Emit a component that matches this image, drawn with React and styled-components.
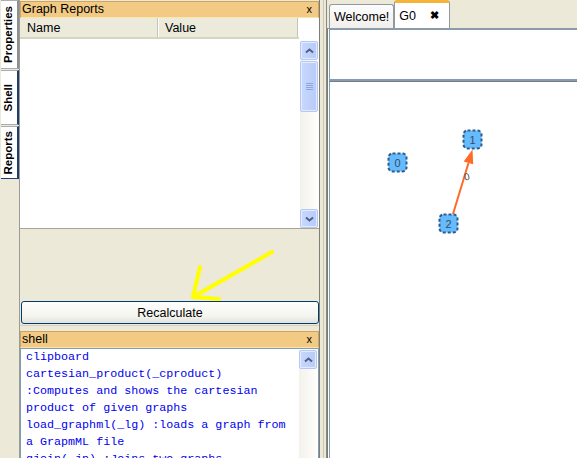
import React from 'react';
import styled, { createGlobalStyle } from 'styled-components';

const GlobalStyle = createGlobalStyle`
  html, body {
    margin: 0;
    padding: 0;
    background: #ECE9D8;
  }
  body {
    font-family: "Liberation Sans", Arial, sans-serif;
  }
`;

const Window = styled.div`
  position: relative;
  width: 577px;
  height: 458px;
  display: flex;
  background: #ECE9D8;
  overflow: hidden;
  font-size: 12.5px;
  color: #000;
`;

/* ---- left vertical tab strip ---- */

const SideStrip = styled.div`
  width: 19px;
  flex: none;
  display: flex;
  flex-direction: column;
  gap: 1px;
  padding-left: 1px;
  box-sizing: border-box;
`;

const SideTab = styled.div`
  height: ${({ h }) => h}px;
  box-sizing: border-box;
  background: #fff;
  border: 1px solid #A9ADAD;
  border-left: none;
  border-right: 2px solid ${({ active }) => (active ? '#1E3F6D' : '#8C9090')};
  border-bottom-color: ${({ last }) => (last ? '#1E3F6D' : '#A9ADAD')};
  display: flex;
  align-items: center;
  justify-content: center;
`;

const SideLabel = styled.span`
  writing-mode: vertical-rl;
  transform: rotate(180deg);
  font-weight: bold;
  font-size: 11.5px;
  line-height: 1;
`;

/* ---- left panel ---- */

const LeftPanel = styled.div`
  width: 300px;
  flex: none;
  display: flex;
  flex-direction: column;
  border-left: 1px solid #9C9C94;
  box-sizing: border-box;
`;

const TitleBar = styled.div`
  height: 17px;
  margin-top: 1px;
  box-sizing: border-box;
  background: #F2CA84;
  border: 1px solid #CDA563;
  border-bottom-color: #F8E6B0;
  display: flex;
  align-items: center;
  justify-content: space-between;
  padding: 0 6px 0 1px;
  font-size: 12.5px;
  line-height: 1;
`;

const CloseX = styled.span`
  font-size: 11px;
`;

const TableArea = styled.div`
  display: flex;
  height: 210px;
  border-bottom: 1px solid #A8A596;
  background: #fff;
`;

const TableMain = styled.div`
  flex: 1;
  display: flex;
  flex-direction: column;
`;

const HeaderRow = styled.div`
  height: 21px;
  box-sizing: border-box;
  display: flex;
  background: #EBEADB;
  border-bottom: 2px solid #D8D4C4;
`;

const HeaderCell = styled.div`
  width: ${({ w }) => w}px;
  box-sizing: border-box;
  padding-left: 7px;
  display: flex;
  align-items: center;
  border-right: 1px solid #C7C5B2;
  box-shadow: 1px 0 0 #fff;
`;

const TableBody = styled.div`
  flex: 1;
  background: #fff;
`;

const ScrollCol = styled.div`
  width: 20px;
  flex: none;
  display: flex;
  flex-direction: column;
  padding: ${({ top }) => top}px 1px 0 1px;
  box-sizing: border-box;
  background: #fff;
`;

const Track = styled.div`
  flex: 1;
  display: flex;
  flex-direction: column;
  background: linear-gradient(to right, #F3F1EB, #FEFEFB);
`;

const ScrollBtn = styled.div`
  height: 19px;
  box-sizing: border-box;
  border: 1px solid #B5C8F3;
  border-radius: 2px;
  background: linear-gradient(to right, #C8D8FD, #B7CBF8);
  box-shadow: inset 0 0 0 1px #E3EBFE;
  display: flex;
  align-items: center;
  justify-content: center;
`;

const Thumb = styled(ScrollBtn)`
  height: 51px;
  margin-top: 1px;
  flex-direction: column;
  gap: 1px;
`;

const Grip = styled.div`
  width: 7px;
  height: 1px;
  background: #8EA6E0;
`;

const Spacer = styled.div`
  flex: 1;
`;

const Blank = styled.div`
  height: 72px;
`;

const Button = styled.button`
  height: 23px;
  margin: 0 0 0 1px;
  border: 1px solid #003C74;
  border-radius: 3px;
  background: linear-gradient(#FEFEFD, #F3F3EF 70%, #E2E1DA);
  font-family: "Liberation Sans", Arial, sans-serif;
  font-size: 12.5px;
  color: #000;
  padding: 0;
`;

const PaneGap = styled.div`
  height: 5px;
  border-top: 1px solid #D4D0C4;
  box-sizing: border-box;
  margin-top: 1px;
`;

const ShellBody = styled.div`
  flex: 1;
  display: flex;
  min-height: 0;
  border: 1px solid #7F9DB9;
  border-bottom: none;
  background: #fff;
  overflow: hidden;
`;

const ShellText = styled.div`
  flex: 1;
  padding: 0 0 0 5px;
  font-family: "Liberation Mono", "Courier New", monospace;
  font-size: 11.7px;
  line-height: 17px;
  color: #0000F0;
  white-space: pre;
`;

/* ---- splitter ---- */

const Splitter = styled.div`
  width: 8px;
  flex: none;
  box-sizing: border-box;
  border-left: 1px solid #7E7E76;
  border-right: 1px solid #8A8A82;
  box-shadow: inset 3px 0 0 #ECE9D8, inset 4px 0 0 #C9C6B6;
`;

/* ---- right editor area ---- */

const RightPanel = styled.div`
  flex: 1;
  display: flex;
  flex-direction: column;
  min-width: 0;
`;

const TabRow = styled.div`
  height: 28px;
  display: flex;
  align-items: flex-end;
  padding-left: 2px;
`;

const DocTab = styled.div`
  height: ${({ active }) => (active ? 28 : 24)}px;
  box-sizing: border-box;
  padding: 0 ${({ active }) => (active ? 10 : 4)}px 0 4px;
  display: flex;
  align-items: center;
  gap: 14px;
  border: 1px solid #919B9C;
  border-bottom: none;
  border-radius: 3px 3px 0 0;
  background: ${({ active }) => (active ? '#fff' : 'linear-gradient(#FCFCFE, #F0EFEA)')};
  border-top: ${({ active }) => (active ? '3px solid #F5B33A' : '1px solid #919B9C')};
  font-size: 12.5px;
`;

const TabClose = styled.span`
  font-size: 11px;
  font-weight: bold;
`;

const Editor = styled.div`
  flex: 1;
  display: flex;
  flex-direction: column;
  background: #fff;
  border-left: 1px solid #7A7A72;
  border-top: 1px solid #919B9C;
  padding-left: 1px;
`;

const TopBox = styled.div`
  height: 49px;
  border-top: 1px solid #7F9DB9;
  border-left: 1px solid #7F9DB9;
  background: #fff;
`;

const Divider = styled.div`
  height: 3px;
  box-sizing: border-box;
  border-top: 1px solid #7F9DB9;
  border-bottom: 1px solid #6D7F8F;
  background: #8D9AA4;
`;

const Canvas = styled.div`
  flex: 1;
  position: relative;
  border-left: 1px solid #7F9DB9;
  background: #fff;
`;

const CanvasSvg = styled.svg`
  position: absolute;
  left: 0;
  top: 0;
  width: 100%;
  height: 100%;
`;

const Overlay = styled.svg`
  position: absolute;
  left: 0;
  top: 0;
  width: 577px;
  height: 458px;
  pointer-events: none;
`;

const Chevron = ({ down }) => (
  <svg width="9" height="6" viewBox="0 0 9 6">
    <path
      d={down ? 'M1 1.5 L4.5 4.5 L8 1.5' : 'M1 4.5 L4.5 1.5 L8 4.5'}
      fill="none"
      stroke="#4D6185"
      strokeWidth="2"
    />
  </svg>
);

const ScrollBar = ({ top, full }) => (
  <ScrollCol top={top}>
    <Track>
      <ScrollBtn><Chevron /></ScrollBtn>
      {full && (
        <Thumb>
          <Grip /><Grip /><Grip /><Grip />
        </Thumb>
      )}
      <Spacer />
      {full && <ScrollBtn><Chevron down /></ScrollBtn>}
    </Track>
  </ScrollCol>
);

const shellLines = [
  'clipboard',
  'cartesian_product(_cproduct)',
  ':Computes and shows the cartesian',
  'product of given graphs',
  'load_graphml(_lg) :loads a graph from',
  'a GrapmML file',
  'gjoin(_jp) :Joins two graphs',
];

const nodes = [
  { id: '0', x: 58, y: 71 },
  { id: '1', x: 133, y: 48 },
  { id: '2', x: 109, y: 132 },
];

const Node = ({ id, x, y }) => (
  <g>
    <rect
      x={x + 0.5}
      y={y + 0.5}
      width="18"
      height="18"
      rx="4"
      fill="#66BBFF"
      stroke="#2F5D8A"
      strokeWidth="2"
      strokeDasharray="3 2"
    />
    <text
      x={x + 9.5}
      y={y + 14}
      textAnchor="middle"
      fontSize="11"
      fontFamily="Liberation Sans, Arial, sans-serif"
      fill="#3C4A5C"
    >
      {id}
    </text>
  </g>
);

export default function App() {
  return (
    <Window>
      <GlobalStyle />
      <SideStrip>
        <SideTab h={69}><SideLabel>Properties</SideLabel></SideTab>
        <SideTab h={55} active><SideLabel>Shell</SideLabel></SideTab>
        <SideTab h={53} active last><SideLabel>Reports</SideLabel></SideTab>
      </SideStrip>

      <LeftPanel>
        <TitleBar>
          <span>Graph Reports</span>
          <CloseX>x</CloseX>
        </TitleBar>
        <TableArea>
          <TableMain>
            <HeaderRow>
              <HeaderCell w={138}>Name</HeaderCell>
              <HeaderCell w={140}>Value</HeaderCell>
            </HeaderRow>
            <TableBody />
          </TableMain>
          <ScrollBar top={23} full />
        </TableArea>
        <Blank />
        <Button>Recalculate</Button>
        <PaneGap />
        <TitleBar>
          <span>shell</span>
          <CloseX>x</CloseX>
        </TitleBar>
        <ShellBody>
          <ShellText>
            {shellLines.map(line => (
              <div key={line}>{line}</div>
            ))}
          </ShellText>
          <ScrollBar top={1} />
        </ShellBody>
      </LeftPanel>

      <Splitter />

      <RightPanel>
        <TabRow>
          <DocTab>Welcome!</DocTab>
          <DocTab active>
            <span>G0</span>
            <TabClose>✖</TabClose>
          </DocTab>
        </TabRow>
        <Editor>
          <TopBox />
          <Divider />
          <Canvas>
            <CanvasSvg>
              <line x1="123" y1="132" x2="138.5" y2="81" stroke="#FF6A26" strokeWidth="2" />
              <polygon points="142.5,67.5 143.2,82.3 133.7,79.5" fill="#FF6A26" />
              <text
                x="134"
                y="99"
                fontSize="10"
                fontFamily="Liberation Sans, Arial, sans-serif"
                fill="#4A4A4A"
                transform="rotate(-15 134 95)"
              >
                0
              </text>
              {nodes.map(n => (
                <Node key={n.id} {...n} />
              ))}
            </CanvasSvg>
          </Canvas>
        </Editor>
      </RightPanel>

      <Overlay viewBox="0 0 577 458">
        <g stroke="#FFFF00" strokeWidth="4" strokeLinecap="round" fill="none">
          <line x1="272" y1="252" x2="193" y2="297" />
          <line x1="200" y1="267" x2="193" y2="297" />
          <line x1="193" y1="297" x2="219" y2="299" />
        </g>
      </Overlay>
    </Window>
  );
}
